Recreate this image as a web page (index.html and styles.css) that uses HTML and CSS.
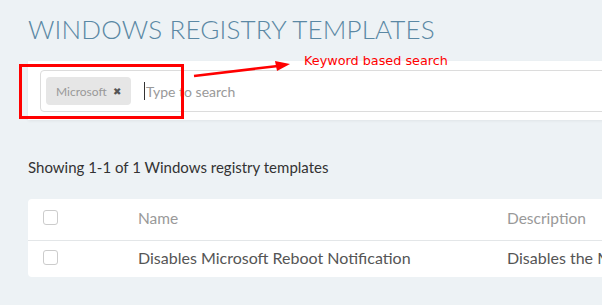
FILE: index.html
```html
<!DOCTYPE html>
<html lang="en">
<head>
  <title>Windows Registry Templates</title>
  <meta name="viewport" content="width=device-width, initial-scale=1">
  <meta charset="UTF-8">
  <link rel="stylesheet" href="styles.css">
</head>
<body>
  <div class="page">
    <h1 class="title">WINDOWS REGISTRY TEMPLATES</h1>

    <div class="search-panel">
      <div class="search-input">
        <span class="chip">Microsoft <span class="chip-x">&#10006;</span></span>
        <span class="caret"></span>
        <span class="placeholder">Type to search</span>
      </div>
    </div>

    <p class="count">Showing 1-1 of 1 Windows registry templates</p>

    <div class="table-card">
      <div class="row head">
        <div class="cell check"><span class="box"></span></div>
        <div class="cell name">Name</div>
        <div class="cell desc">Description</div>
      </div>
      <div class="row">
        <div class="cell check"><span class="box"></span></div>
        <div class="cell name">Disables Microsoft Reboot Notification</div>
        <div class="cell desc">Disables the Microsoft reboot notification</div>
      </div>
    </div>
  </div>

  <!-- annotation overlay -->
  <div class="note-box"></div>
  <svg class="note-arrow" width="110" height="20" viewBox="0 0 110 20">
    <line x1="2" y1="17" x2="86" y2="7" stroke="#ff0000" stroke-width="2.5"/>
    <polygon points="98,5 83,2 85,12" fill="#ff0000"/>
  </svg>
  <div class="note-text">Keyword based search</div>
</body>
</html>
```

FILE: styles.css
```css
html, body {
  margin: 0;
  padding: 0;
  overflow: hidden;
}
body {
  font-family: Lato, 'Open Sans', sans-serif;
  background: #edf2f5;
  color: #444;
  position: relative;
  height: 305px;
}
.page {
  width: 700px;
  padding-left: 28px;
}
.title {
  margin: 0;
  padding-top: 13px;
  height: 61px;
  box-sizing: border-box;
  font-size: 26px;
  font-weight: 300;
  letter-spacing: 0.15px;
  color: #5a88a4;
}
.search-panel {
  background: white;
  padding: 9px 12px 8px 12px;
  box-shadow: 0 1px 3px rgba(0,0,0,0.06);
}
.search-input {
  display: flex;
  align-items: center;
  height: 42px;
  box-sizing: border-box;
  border: 1px solid #dcdcdc;
  border-radius: 4px;
  padding: 0 5px;
}
.chip {
  display: flex;
  align-items: center;
  height: 28px;
  width: 85px;
  box-sizing: border-box;
  padding-left: 10px;
  background: #e6e6e6;
  border-radius: 4px;
  font-size: 12px;
  color: #999;
}
.chip-x {
  font-size: 10px;
  color: #555;
  margin-left: 6px;
}
.caret {
  width: 1px;
  height: 18px;
  background: #333;
  margin-left: 13px;
}
.placeholder {
  font-size: 14px;
  color: #999;
  margin-left: 1px;
}
.count {
  margin: 0;
  padding-top: 38px;
  height: 79px;
  box-sizing: border-box;
  font-size: 15px;
  color: #333;
}
.table-card {
  background: white;
  border-radius: 4px;
}
.row {
  display: flex;
  align-items: center;
  height: 36px;
  box-sizing: border-box;
  padding-bottom: 3px;
  font-size: 16px;
  color: #555;
}
.row.head {
  height: 42px;
  padding-bottom: 4px;
  border-bottom: 1px solid #e3e6e8;
  color: #999;
  font-size: 15.5px;
}
.cell {
  flex-shrink: 0;
}
.cell.check {
  width: 110px;
  padding-left: 15px;
  box-sizing: border-box;
}
.box {
  display: block;
  width: 13px;
  height: 13px;
  border: 1px solid #ccc;
  border-radius: 3px;
}
.cell.name {
  width: 369px;
}
.cell.desc {
  white-space: nowrap;
}
.note-box {
  position: absolute;
  left: 19px;
  top: 64px;
  width: 159px;
  height: 49px;
  border: 3px solid #ff0000;
}
.note-arrow {
  position: absolute;
  left: 192px;
  top: 59px;
}
.note-text {
  position: absolute;
  left: 304px;
  top: 53px;
  font-family: 'DejaVu Sans', sans-serif;
  font-size: 12.8px;
  color: #ff0000;
}
```
